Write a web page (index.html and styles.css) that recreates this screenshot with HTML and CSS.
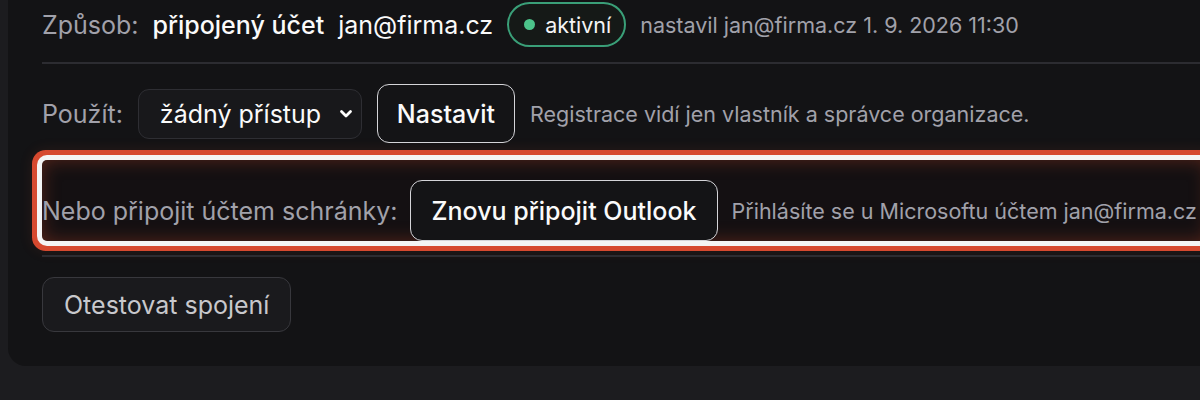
FILE: index.html
```html
<!DOCTYPE html>
<html lang="cs">
<head>
<meta charset="utf-8">
<title>Připojení schránky</title>
<link rel="stylesheet" href="styles.css">
</head>
<body>
<div class="card">
  <div class="row row-status">
    <span class="label">Způsob:</span>
    <span class="value-strong">připojený účet</span>
    <span class="value">jan@firma.cz</span>
    <span class="badge"><span class="dot"></span>aktivní</span>
    <span class="meta">nastavil jan@firma.cz 1. 9. 2026 11:30</span>
  </div>
  <div class="row row-use">
    <span class="label">Použít:</span>
    <div class="select">
      <span>žádný přístup</span>
      <svg class="chev" width="14" height="10" viewBox="0 0 14 10"><path d="M2.5 2.5 L7 7 L11.5 2.5" fill="none" stroke="#ffffff" stroke-width="2.8" stroke-linecap="round" stroke-linejoin="round"/></svg>
    </div>
    <button class="btn btn-primary">Nastavit</button>
    <span class="meta">Registrace vidí jen vlastník a správce organizace.</span>
  </div>
  <div class="highlight">
    <div class="row row-connect">
      <span class="label">Nebo připojit účtem schránky:</span>
      <button class="btn btn-primary btn-tall">Znovu připojit Outlook</button>
      <span class="meta">Přihlásíte se u Microsoftu účtem jan@firma.cz</span>
    </div>
  </div>
  <div class="divider"></div>
  <div class="row row-test">
    <button class="btn btn-secondary">Otestovat spojení</button>
  </div>
</div>
</body>
</html>
```
FILE: styles.css
```css
html, body {
  margin: 0;
  padding: 0;
}
body {
  background: #1c1c1f;
  width: 1200px;
  height: 400px;
  overflow: hidden;
  font-family: "Inter", "Noto Sans", sans-serif;
  color: #f4f4f5;
}
.card {
  margin-left: 8px;
  width: 1240px;
  background: #131315;
  border-radius: 0 0 0 18px;
  padding: 0 0 34px 34px;
  box-sizing: border-box;
}
.row {
  display: flex;
  align-items: center;
  white-space: nowrap;
}
.label {
  color: #a1a1aa;
  font-size: 25px;
}
.value-strong {
  font-size: 25px;
  font-weight: 500;
  color: #fafafa;
}
.value {
  font-size: 25px;
  color: #fafafa;
}
.meta {
  color: #a1a1aa;
  font-size: 21.5px;
}
.row-status {
  gap: 14px;
  padding-top: 2px;
  height: 45px;
  padding-bottom: 15px;
  border-bottom: 2px solid #2c2c31;
}
.badge {
  display: inline-flex;
  align-items: center;
  gap: 10px;
  height: 45px;
  box-sizing: border-box;
  padding: 0 13px 0 15px;
  border: 2px solid #3a9f78;
  border-radius: 999px;
  background: #151917;
  color: #f4f4f5;
  font-size: 21.5px;
}
.dot {
  width: 11px;
  height: 11px;
  border-radius: 50%;
  background: #4cc38a;
}
.row-use {
  gap: 15px;
  padding-top: 20px;
}
.select {
  display: flex;
  align-items: center;
  justify-content: space-between;
  width: 224px;
  height: 50px;
  box-sizing: border-box;
  padding: 0 8px 0 21px;
  border: 1.5px solid #2e2e33;
  border-radius: 11px;
  background: #18181b;
  font-size: 25px;
  color: #fafafa;
}
.btn {
  font-family: "Inter", "Noto Sans", sans-serif;
  font-size: 25px;
  border-radius: 12px;
  cursor: pointer;
  box-sizing: border-box;
}
.btn-primary {
  height: 59px;
  padding: 0 19px;
  background: #141416;
  border: 1.5px solid #d4d4d8;
  color: #fafafa;
  font-weight: 500;
}
.btn-tall {
  height: 61px;
  padding: 0 20px;
}
.highlight {
  margin-top: 17px;
  margin-right: 40px;
  padding-top: 20px;
  border-radius: 5px;
  background: #141012;
  box-shadow:
    inset 0 0 18px rgba(200, 70, 40, 0.38),
    0 0 0 5px #f4f4f4,
    0 0 0 10px #d6492f,
    0 0 14px 10px rgba(200, 70, 40, 0.12);
}
.row-connect {
  gap: 13px;
}
.row-connect .meta {
  margin-left: 1px;
}
.divider {
  margin-top: 14px;
  border-top: 2px solid #2c2c31;
}
.row-test {
  padding-top: 20px;
}
.btn-secondary {
  height: 55px;
  padding: 0 21px;
  background: #1a1a1d;
  border: 1.5px solid #38383d;
  color: #c8c8cc;
  font-weight: 400;
}
```
